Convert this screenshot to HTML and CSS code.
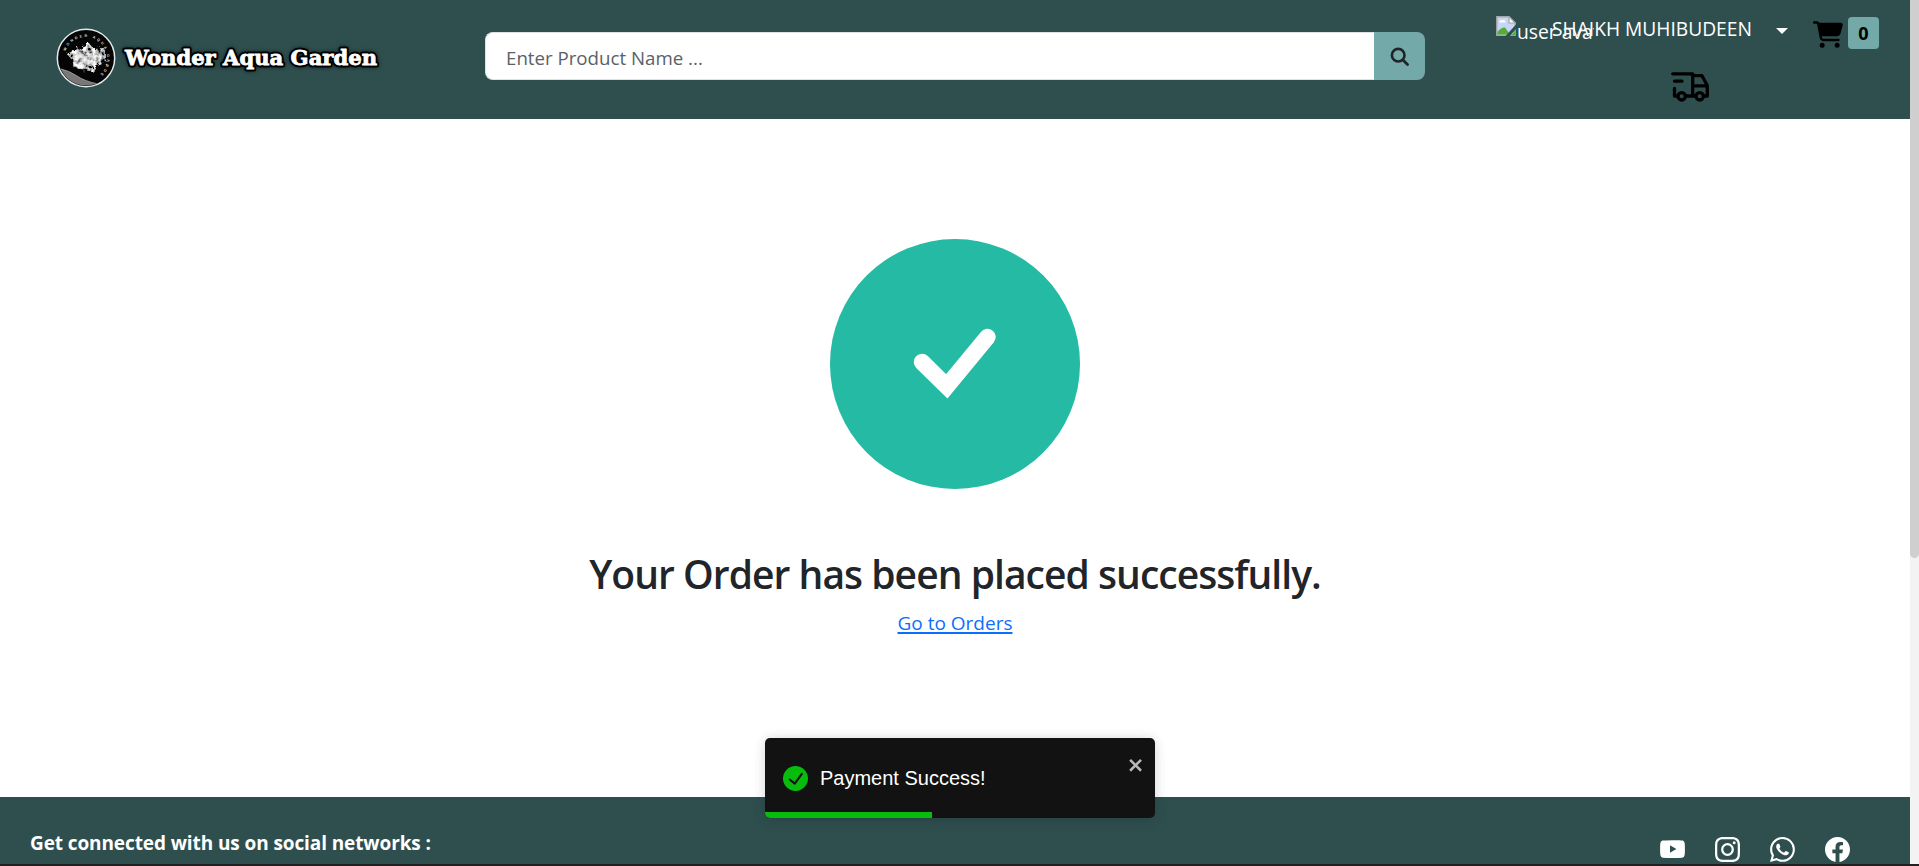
FILE: index.html
```html
<!DOCTYPE html>
<html lang="en">
<head>
<meta charset="utf-8">
<title>Wonder Aqua Garden</title>
<link rel="stylesheet" href="styles.css">
</head>
<body>
<div class="viewport">
  <div class="page">
    <header class="header">
      <a class="brand">
        <svg class="brand-logo" viewBox="0 0 60 60">
          <defs>
            <path id="ring" d="M9.5 23A21.5 21.5 0 1 1 44 46.5"/>
            <clipPath id="disc"><circle cx="30" cy="30" r="27.5"/></clipPath>
            <filter id="rough" x="-20%" y="-20%" width="140%" height="140%">
              <feTurbulence type="fractalNoise" baseFrequency=".22" numOctaves="3" seed="4" result="n"/>
              <feDisplacementMap in="SourceGraphic" in2="n" scale="8" result="d"/>
              <feColorMatrix in="n" type="matrix" values="2.6 0 0 0 -.75  2.6 0 0 0 -.75  2.6 0 0 0 -.75  0 0 0 0 1" result="g"/>
              <feComposite in="g" in2="d" operator="in"/>
            </filter>
          </defs>
          <circle cx="30" cy="30" r="28.7" fill="#050505" stroke="#e4e8e8" stroke-width="1.5"/>
          <g clip-path="url(#disc)">
            <path d="M2 40Q14 43 21 48T42 56L30 62H2Z" fill="#777"/>
            <path d="M2 40Q14 43 21 48T42 56" fill="none" stroke="#aaa" stroke-width=".8"/>
          </g>
          <path filter="url(#rough)" d="M11 26L20 21 27 18 33 15 37 20 47 19 50 27 49 35 41 38 35 43 25 42 17 39 16 32Z" fill="#ccc"/>
          <path d="M15 26l5 1 1 7 7 5 6-1 4-4-7-3-3-7-5 0-4 3z" fill="#ddd" opacity=".45"/>
          <text class="logo-ring"><textPath href="#ring" textLength="82">WONDER AQUA GARDEN</textPath></text>
        </svg>
        <svg class="brand-name" viewBox="0 0 262 40">
          <g class="brand-glow"><text x="4" y="27" textLength="252" lengthAdjust="spacingAndGlyphs">Wonder Aqua Garden</text></g>
          <text class="brand-fill" x="4" y="27" textLength="252" lengthAdjust="spacingAndGlyphs" aria-hidden="true">Wonder Aqua Garden</text>
        </svg>
      </a>
      <form class="search">
        <input class="search-input" type="text" placeholder="Enter Product Name ...">
        <button class="search-button" type="button">
          <svg viewBox="0 0 20 20"><circle cx="8.2" cy="9.2" r="6.3" fill="none" stroke="#1d2529" stroke-width="2.6"/><path d="M13 14l4.500 4.500" stroke="#1d2529" stroke-width="2.8" stroke-linecap="round"/></svg>
        </button>
      </form>
      <div class="account">
        <div class="account-row">
          <span class="avatar">
            <svg viewBox="0 0 20 20">
              <path d="M.8 .8H13L19.2 7V19.2H.8Z" fill="#c5d6f7" stroke="#a6a6a6" stroke-width="1.4"/>
              <path d="M13 .8V7H19.2Z" fill="#fff" stroke="#a6a6a6" stroke-width="1.2"/>
              <path d="M3.5 6.5h6a2 2 0 0 0-3-2.2A2 2 0 0 0 3.500 6.500Z" fill="#fff"/>
              <path d="M1.500 18.500V16Q5 11 9 11.500L14 18.500Z" fill="#56ac35"/>
              <path d="M20 8.500V13L14 20H9.500Z" fill="#2f4f4f"/>
              <path d="M19.200 14.500V19.200H15.500Z" fill="#56ac35"/>
            </svg>
            <span class="avatar-alt">user avatar</span>
          </span>
          <span class="user-name">SHAIKH MUHIBUDEEN</span>
          <span class="caret"></span>
          <svg class="cart" viewBox="0 0 576 512"><path d="M0 24C0 10.700 10.700 0 24 0H69.500c22 0 41.500 12.800 50.600 32h411c26.300 0 45.500 25 38.600 50.400l-41 152.300c-8.500 31.400-37 53.300-69.500 53.300H170.700l5.400 28.500c2.200 11.300 12.100 19.500 23.600 19.500H488c13.300 0 24 10.700 24 24s-10.700 24-24 24H199.700c-34.600 0-64.300-24.600-70.700-58.500L77.400 54.500c-.7-3.800-4-6.500-7.900-6.500H24C10.700 48 0 37.300 0 24zM128 464a48 48 0 1 1 96 0 48 48 0 1 1-96 0zm336-48a48 48 0 1 1 0 96 48 48 0 1 1 0-96z"/></svg>
          <span class="badge">0</span>
        </div>
        <svg class="truck" viewBox="0 0 39 30"><g fill="none" stroke="#000" stroke-width="3.3" stroke-linecap="round" stroke-linejoin="round"><path d="M1.700 1.800H21.700V24H15M3.500 9.200H11M3.500 16.500V24H6M21.700 3.700H31L36.300 13.500V24H33M21.700 13.800H36M21.700 24H24.500"/><circle cx="10.700" cy="24.300" r="3.700"/><circle cx="28.700" cy="24.300" r="3.700"/></g></svg>
      </div>
    </header>
    <main class="success">
      <svg class="success-icon" viewBox="0 0 250 250"><circle cx="125" cy="125" r="125" fill="#24baa3"/><path d="M92 123L116.800 147.300L157.500 98" fill="none" stroke="#fff" stroke-width="16.500" stroke-linecap="round" stroke-miterlimit="10"/></svg>
      <h1 class="success-title">Your Order has been placed successfully.</h1>
      <a class="orders-link" href="#">Go to Orders</a>
    </main>
    <footer class="footer">
      <strong class="footer-text">Get connected with us on social networks :</strong>
      <div class="social">
        <svg viewBox="0 0 16 16"><path fill-rule="evenodd" d="M8 2C12 2 14 2.100 14.600 2.300Q15.600 2.700 15.800 4Q16.100 7.700 15.800 11.400Q15.600 12.900 14.300 13.200Q8 13.800 1.700 13.200Q.4 12.900.2 11.400Q-.1 7.700.2 4Q.4 2.700 1.500 2.300Q2 2.100 8 2ZM6.400 5.200V10L10.500 7.600Z"/></svg>
        <svg viewBox="0 0 16 16"><path d="M8 0C5.829 0 5.556.01 4.703.048 3.850.088 3.269.222 2.760.420a3.900 3.900 0 0 0-1.417.923A3.900 3.900 0 0 0 .420 2.760C.222 3.268.087 3.850.048 4.700.010 5.555 0 5.827 0 8.001c0 2.172.010 2.444.048 3.297.040.852.174 1.433.372 1.942.205.526.478.972.923 1.417.444.445.890.719 1.416.923.510.198 1.090.333 1.942.372C5.555 15.990 5.827 16 8 16s2.444-.010 3.298-.048c.851-.040 1.434-.174 1.943-.372a3.900 3.900 0 0 0 1.416-.923c.445-.445.718-.891.923-1.417.197-.509.332-1.090.372-1.942C15.990 10.445 16 10.173 16 8s-.010-2.445-.048-3.299c-.040-.851-.175-1.433-.372-1.941a3.900 3.900 0 0 0-.923-1.417A3.900 3.900 0 0 0 13.240.420c-.510-.198-1.092-.333-1.943-.372C10.443.010 10.172 0 8 0m0 1.442c2.136 0 2.389.007 3.232.046.780.035 1.204.166 1.486.275.373.145.640.319.920.599s.453.546.598.920c.110.281.240.705.275 1.485.039.843.047 1.096.047 3.231s-.008 2.389-.047 3.232c-.035.780-.166 1.203-.275 1.485a2.500 2.500 0 0 1-.599.919c-.280.280-.546.453-.920.598-.280.110-.704.240-1.485.276-.843.038-1.096.047-3.232.047s-2.390-.009-3.233-.047c-.780-.036-1.203-.166-1.485-.276a2.500 2.500 0 0 1-.920-.598 2.500 2.500 0 0 1-.600-.920c-.109-.281-.240-.705-.275-1.485-.038-.843-.046-1.096-.046-3.233s.008-2.388.046-3.231c.036-.780.166-1.204.276-1.486.145-.373.319-.640.599-.920s.546-.453.920-.598c.282-.110.705-.240 1.485-.276.844-.038 1.097-.046 3.233-.046m4.270 1.328a.960.960 0 1 0 0 1.920.960.960 0 0 0 0-1.920M8 3.892a4.108 4.108 0 1 0 0 8.216 4.108 4.108 0 0 0 0-8.216m0 1.441a2.667 2.667 0 1 1 0 5.334 2.667 2.667 0 0 1 0-5.334"/></svg>
        <svg viewBox="0 0 16 16"><path d="M13.601 2.326A7.850 7.850 0 0 0 7.994 0C3.627 0 .068 3.558.064 7.926c0 1.399.366 2.760 1.057 3.965L0 16l4.204-1.102a7.900 7.900 0 0 0 3.790.965h.004c4.368 0 7.926-3.558 7.930-7.930A7.900 7.900 0 0 0 13.600 2.326zM7.994 14.521a6.600 6.600 0 0 1-3.356-.920l-.240-.144-2.494.654.666-2.433-.156-.251a6.560 6.560 0 0 1-1.007-3.505c0-3.626 2.957-6.584 6.591-6.584a6.560 6.560 0 0 1 4.660 1.931 6.560 6.560 0 0 1 1.928 4.660c-.004 3.639-2.961 6.592-6.592 6.592m3.615-4.934c-.197-.099-1.170-.578-1.353-.646-.182-.065-.315-.099-.445.099-.133.197-.513.646-.627.775-.114.133-.232.148-.430.050-.197-.100-.836-.308-1.592-.985-.590-.525-.985-1.175-1.103-1.372-.114-.198-.011-.304.088-.403.087-.088.197-.232.296-.346.100-.114.133-.198.198-.330.065-.134.034-.248-.015-.347-.050-.099-.445-1.076-.612-1.470-.160-.389-.323-.335-.445-.340-.114-.007-.247-.007-.380-.007a.730.730 0 0 0-.529.247c-.182.198-.691.677-.691 1.654s.710 1.916.810 2.049c.098.133 1.394 2.132 3.383 2.992.470.205.840.326 1.129.418.475.152.904.129 1.246.080.380-.058 1.171-.480 1.338-.943.164-.464.164-.860.114-.943-.049-.084-.182-.133-.380-.232"/></svg>
        <svg viewBox="0 0 16 16"><path d="M16 8.049c0-4.446-3.582-8.050-8-8.050C3.580 0-.002 3.603-.002 8.050c0 4.017 2.926 7.347 6.750 7.951v-5.625h-2.030V8.050H6.750V6.275c0-2.017 1.195-3.131 3.022-3.131.876 0 1.791.157 1.791.157v1.980h-1.009c-.993 0-1.303.621-1.303 1.258v1.510h2.218l-.354 2.326H9.250V16c3.824-.604 6.750-3.934 6.750-7.951"/></svg>
      </div>
    </footer>
  </div>
  <div class="scrollbar"><div class="scrollbar-thumb"></div></div>
  <div class="toast">
    <svg class="toast-icon" viewBox="0 0 24 24"><path fill="#07bc0c" d="M12 0a12 12 0 1 0 12 12A12.014 12.014 0 0 0 12 0Zm6.927 8.200-6.845 9.289a1.011 1.011 0 0 1-1.430.188l-4.888-3.908a1 1 0 1 1 1.250-1.562l4.076 3.261 6.227-8.451a1 1 0 1 1 1.610 1.183Z"/></svg>
    <span class="toast-text">Payment Success!</span>
    <svg class="toast-close" viewBox="0 0 14 16"><path fill="#b8b8b8" fill-rule="evenodd" d="M7.710 8.230l3.750 3.750-1.480 1.480-3.750-3.750-3.750 3.750L1 11.980l3.750-3.750L1 4.480 2.480 3l3.750 3.750L9.980 3l1.480 1.480-3.750 3.750z"/></svg>
    <div class="toast-progress"></div>
  </div>
</div>
</body>
</html>
```
FILE: styles.css
```css
* { box-sizing: border-box; }
body {
  margin: 0;
  font-family: "Open Sans", "Noto Sans", sans-serif;
  font-size: 19px;
  color: #212529;
  background: #fff;
}
.viewport {
  position: relative;
  display: flex;
  height: 866px;
  overflow: hidden;
  border-bottom: 2px solid #231f20;
}
.page { flex: 1; display: flex; flex-direction: column; }
.header {
  display: flex;
  align-items: flex-start;
  height: 119px;
  background: #2f4f4f;
}
.brand { display: flex; align-items: center; width: 485px; padding: 28px 0 0 56px; }
.brand-logo { width: 60px; height: 60px; }
.logo-ring { font: bold 3.6px "Liberation Sans", sans-serif; fill: #ddd; }
.brand-name { width: 262px; height: 40px; margin-left: 5px; overflow: visible; }
.brand-name text { font: bold 21px "DejaVu Serif", serif; }
.brand-glow {
  fill: #000;
  stroke: #000;
  stroke-width: 5px;
  stroke-linejoin: round;
  filter: drop-shadow(0 0 2px #0008);
}
.brand-fill { fill: #fff; stroke: #fff; stroke-width: .8px; }
.search { display: flex; width: 940px; height: 48px; margin-top: 32px; }
.search-input {
  flex: 1;
  padding: 2px 20px 0;
  border: 1px solid #dee2e6;
  border-right: 0;
  border-radius: 8px 0 0 8px;
  font: 18.7px "Open Sans", sans-serif;
}
.search-input::placeholder { color: #5b6167; opacity: 1; }
.search-button {
  display: grid;
  place-items: center;
  width: 51px;
  padding: 0;
  border: 0;
  border-radius: 0 8px 8px 0;
  background: #74a9a9;
}
.search-button svg { width: 20px; height: 20px; }
.account { display: flex; flex-direction: column; width: 485px; padding: 16px 31px 0 71px; }
.account-row { display: flex; align-items: flex-start; height: 56px; color: #fff; }
.avatar { display: flex; flex: none; width: 56px; white-space: nowrap; }
.avatar svg { flex: none; width: 20px; height: 20px; }
.avatar-alt { flex: none; width: 78px; height: 30px; padding-left: 1px; font-size: 19.3px; line-height: 32px; overflow: hidden; }
.user-name { width: 224px; font-size: 19.2px; line-height: 26px; white-space: nowrap; }
.caret { margin-top: 12px; border: 6px solid transparent; border-top-color: #fff; border-bottom: 0; }
.cart { width: 30px; height: 27px; margin: 5px 5px 0 25px; }
.badge {
  width: 31px;
  height: 32px;
  margin-top: 1px;
  border-radius: 4px;
  background: #74a9a9;
  color: #000;
  font-size: 18px;
  font-weight: 700;
  line-height: 33px;
  text-align: center;
}
.truck { width: 39px; height: 30px; margin-left: 175px; }
.success { display: flex; flex-direction: column; align-items: center; height: 678px; padding-top: 120px; }
.success-icon { width: 250px; height: 250px; }
.success-title {
  margin: 61px 0 0;
  font-size: 39px;
  font-weight: 600;
  line-height: 48px;
  letter-spacing: -.95px;
  white-space: nowrap;
}
.orders-link { margin-top: 10px; color: #0d6efd; line-height: 30px; text-decoration-thickness: 2px; text-underline-offset: 2px; }
.footer {
  display: flex;
  justify-content: space-between;
  flex: 1;
  padding: 31px 60px 0 30px;
  background: #2f4f4f;
  color: #fff;
}
.footer-text { font-weight: 700; line-height: 30px; letter-spacing: -.1px; white-space: nowrap; }
.social { display: flex; gap: 30px; padding-top: 9px; }
.social svg { width: 25px; height: 25px; fill: #fff; }
.scrollbar { width: 9px; background: #f3f3f3; }
.scrollbar-thumb { height: 558px; border-radius: 0 0 5px 5px; background: #cfcfcf; }
.toast {
  position: absolute;
  left: 765px;
  top: 738px;
  display: flex;
  align-items: center;
  width: 390px;
  height: 80px;
  padding: 0 10px 0 18px;
  border-radius: 5px;
  background: #121212;
  color: #fff;
  box-shadow: 0 1px 12px rgba(0, 0, 0, .12), 0 2px 18px rgba(0, 0, 0, .06);
  overflow: hidden;
}
.toast-icon { width: 25px; height: 25px; margin-right: 12px; }
.toast-text { flex: 1; font: 20px "Liberation Sans", Arial, sans-serif; }
.toast-close { align-self: flex-start; width: 17px; height: 20px; margin-top: 17px; }
.toast-progress { position: absolute; left: 0; bottom: 0; width: 167px; height: 6px; background: #07bc0c; }
```
